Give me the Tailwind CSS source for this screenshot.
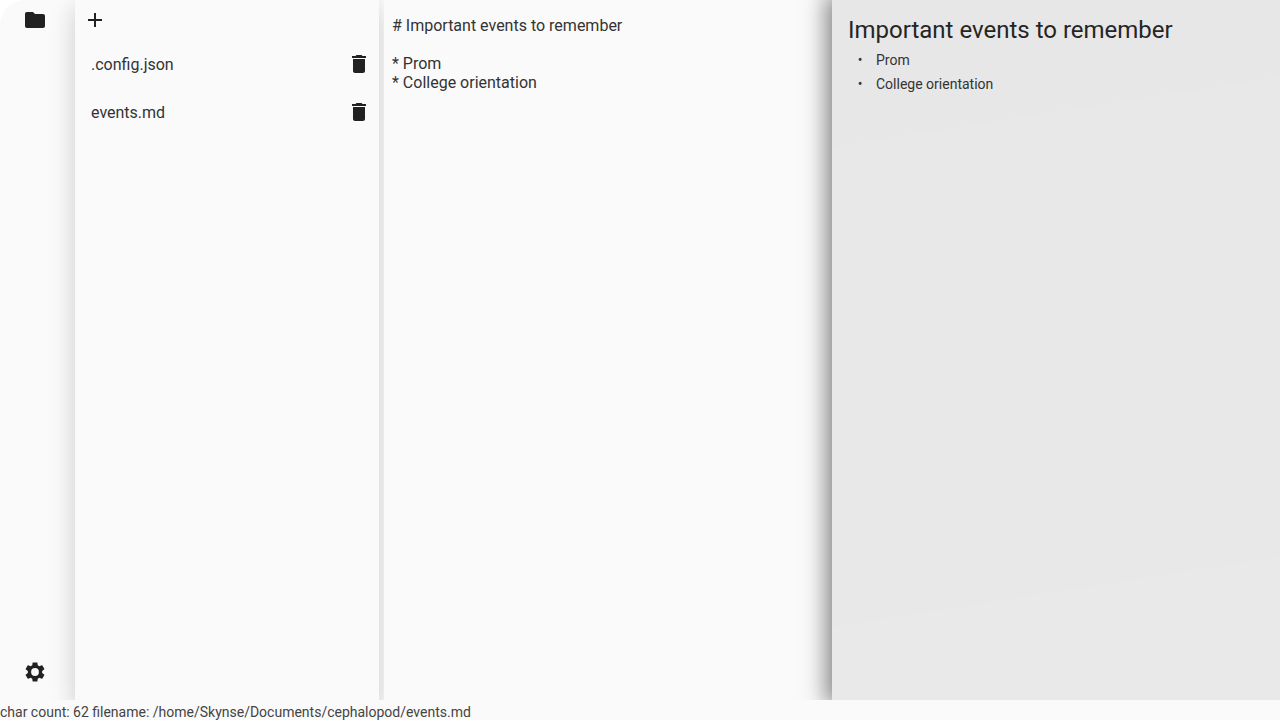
<!DOCTYPE html>
<html lang="en"><head><meta charset="utf-8"><title>Cephalopod</title>
<script src="https://cdn.jsdelivr.net/npm/@tailwindcss/browser@4"></script></head>
<body class="bg-white">
<div class="h-screen w-screen overflow-hidden rounded-tl-[25px] bg-[#fafafa] font-['Roboto',sans-serif] text-[#333333] flex flex-col">
  <div class="flex h-[700px] shrink-0 overflow-hidden">
    <nav class="flex w-[75px] shrink-0 flex-col items-start justify-between pl-[23px] pt-2 pb-4 text-[#212121]">
      <svg class="size-6" viewBox="0 0 24 24" fill="currentColor"><path d="M10 4H4c-1.1 0-1.990.9-1.990 2L2 18c0 1.100.9 2 2 2h16c1.100 0 2-.9 2-2V8c0-1.100-.9-2-2-2h-8l-2-2z"/></svg>
      <svg class="size-6" viewBox="0 0 24 24" fill="currentColor"><path d="M19.14 12.94c.04-.3.06-.61.06-.94 0-.32-.02-.64-.07-.94l2.03-1.58c.18-.14.23-.41.12-.61l-1.92-3.32c-.12-.22-.37-.29-.59-.22l-2.39.96c-.5-.38-1.03-.7-1.62-.94l-.36-2.54c-.04-.24-.24-.41-.48-.41h-3.84c-.24 0-.43.17-.47.41l-.36 2.54c-.59.24-1.130.57-1.62.94l-2.39-.96c-.22-.08-.47 0-.59.22L2.740 8.870c-.12.21-.08.47.12.61l2.03 1.580c-.05.3-.09.63-.09.94s.02.64.07.94l-2.03 1.580c-.18.14-.23.41-.12.61l1.920 3.320c.12.22.37.29.59.22l2.390-.96c.5.38 1.030.7 1.620.94l.36 2.540c.05.24.24.41.48.41h3.840c.24 0 .44-.17.47-.41l.36-2.540c.59-.24 1.130-.56 1.620-.94l2.390.96c.22.08.47 0 .59-.22l1.920-3.320c.12-.22.07-.47-.12-.61l-2.010-1.580zM12 15.900a3.900 3.900 0 1 1 0-7.800 3.900 3.900 0 0 1 0 7.800z"/></svg>
    </nav>
    <aside class="w-[304px] shrink-0 bg-[#fafafa] shadow-[0_6px_6px_-3px_rgba(0,0,0,0.05),0_10px_24px_1px_rgba(0,0,0,0.14),0_4px_20px_3px_rgba(0,0,0,0.03)]">
      <div class="flex h-10 items-center pl-2"><svg class="size-6 text-[#212121]" viewBox="0 0 24 24" fill="currentColor"><path d="M19 13h-6v6h-2v-6H5v-2h6V5h2v6h6v2z"/></svg></div>
      <div class="flex h-12 items-center justify-between pl-4 pr-2 text-base"><span class="pt-0.5">.config.json</span><svg class="size-6 text-[#212121]" viewBox="0 0 24 24" fill="currentColor"><path d="M6 19c0 1.100.9 2 2 2h8c1.100 0 2-.9 2-2V7H6v12zM19 4h-3.500l-1-1h-5l-1 1H5v2h14V4z"/></svg></div>
      <div class="flex h-12 items-center justify-between pl-4 pr-2 text-base"><span class="pt-0.5">events.md</span><svg class="size-6 text-[#212121]" viewBox="0 0 24 24" fill="currentColor"><path d="M6 19c0 1.100.9 2 2 2h8c1.100 0 2-.9 2-2V7H6v12zM19 4h-3.500l-1-1h-5l-1 1H5v2h14V4z"/></svg></div>
    </aside>
    <main class="relative ml-[5px] w-[448px] shrink-0 whitespace-pre bg-[#fafafa] px-2 pt-4 text-base leading-[19px]"># Important events to remember

* Prom
* College orientation</main>
    <section class="relative w-[448px] shrink-0 bg-[linear-gradient(171.1deg,#e7e7e7_19.1%,#e8e8e8_19.1%,#e8e8e8_81.4%,#e9e9e9_81.4%)] px-4 pt-4 shadow-[0_0_22px_5px_rgba(0,0,0,0.5)]">
      <h1 class="text-2xl leading-7 text-[#252525]">Important events to remember</h1>
      <ul class="pt-1 text-sm leading-6">
        <li class="flex"><span class="w-7 pr-1 text-center">•</span>Prom</li>
        <li class="flex"><span class="w-7 pr-1 text-center">•</span>College orientation</li>
      </ul>
    </section>
  </div>
  <footer class="h-5 pt-1 text-sm leading-4 text-[#444444]">char count: 62 filename: /home/Skynse/Documents/cephalopod/events.md</footer>
</div>
</body></html>
